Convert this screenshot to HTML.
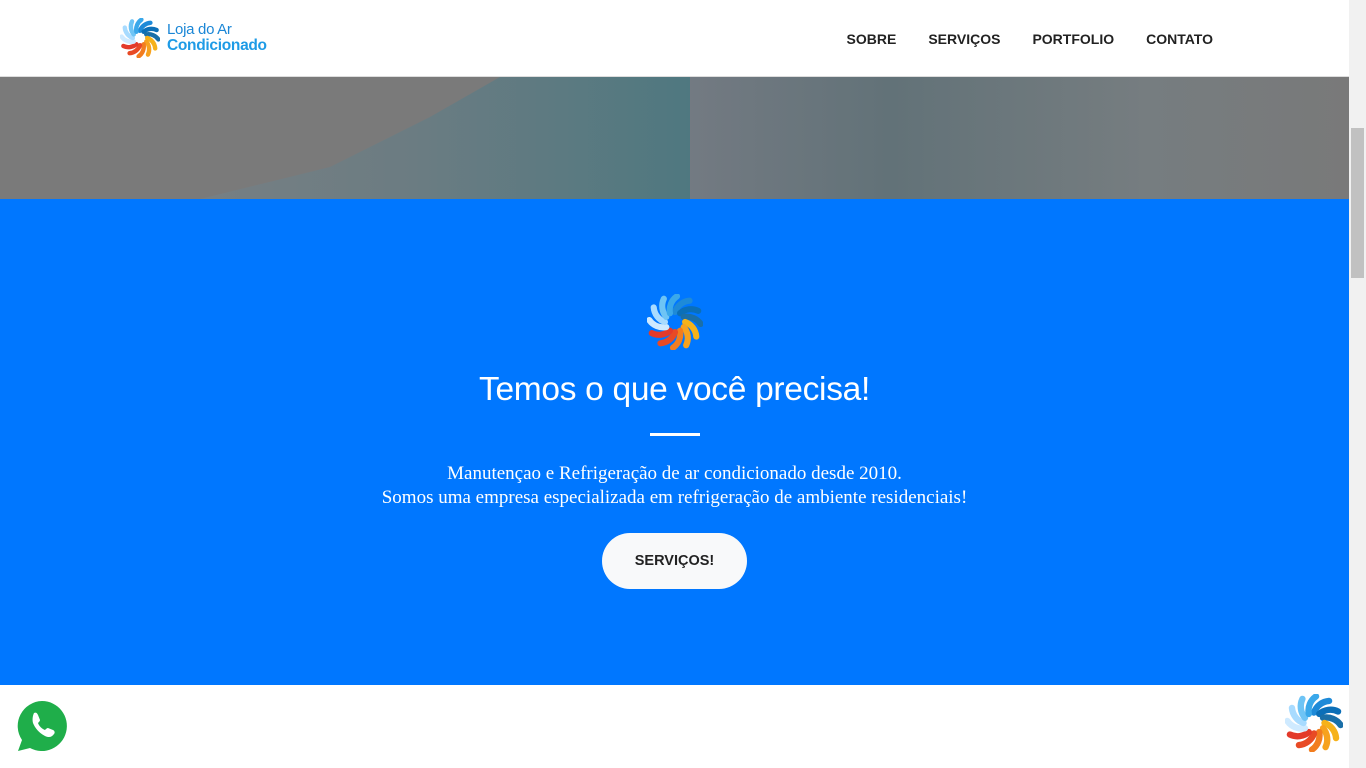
<!DOCTYPE html>
<html><head><meta charset="utf-8"><style>
*{margin:0;padding:0;box-sizing:border-box}
body{width:1366px;height:768px;overflow:hidden;font-family:"Liberation Sans",sans-serif;background:#fff;position:relative}
.page{position:absolute;left:0;top:0;width:1349px;height:768px}
header{position:absolute;top:0;left:0;width:1349px;height:77px;background:#fff;border-bottom:1px solid #ddd;z-index:2}
.logo{position:absolute;left:120px;top:18px;display:flex;align-items:center}
.lt{margin-left:7px;line-height:16px;color:#1a86d6}
.lt .a{font-size:15px;letter-spacing:-.3px}
.lt .b{font-size:15.5px;font-weight:bold;color:#1e9be6;letter-spacing:-.3px}
nav{position:absolute;right:136px;top:31px;display:flex;gap:32px}
nav a{font-size:14px;font-weight:bold;color:#222;letter-spacing:0;text-decoration:none}
.hero{position:absolute;top:77px;left:0;width:1349px;height:122px;overflow:hidden;background:linear-gradient(90deg,#7a7a7a 0%,#7a7a7a 50%,#737a82 51%,#627278 66%,#767d80 85%,#797979 100%)}
.shape{position:absolute;left:0;top:0;width:690px;height:122px;clip-path:polygon(500px 0,690px 0,690px 122px,200px 122px,330px 90px,430px 40px);background:linear-gradient(90deg,#7a8084 20%,#6b7c82 60%,#4f7880 100%)}
.blue{position:absolute;top:199px;left:0;width:1349px;height:486px;background:#0077ff;text-align:center;color:#fff}
h1{font-weight:normal;font-size:33.5px;position:absolute;top:172px;width:100%;letter-spacing:-.3px}
.line{position:absolute;left:650px;top:234px;width:50px;height:3px;background:#fff}
.p{position:absolute;top:263px;width:100%;font-family:"Liberation Serif",serif;font-size:19px;line-height:24px}
.btn{position:absolute;left:602px;top:334px;width:145px;height:56px;border-radius:28px;background:#f8f9fa;color:#222;font-weight:bold;font-size:14.5px;line-height:56px}
.sb{position:absolute;right:0;top:0;width:17px;height:768px;background:#f1f1f1}
.sb div{position:absolute;left:2px;top:128px;width:13px;height:150px;background:#c1c1c1}
</style></head><body>
<svg width="0" height="0" style="position:absolute"><defs>
<g id="sw">
<g fill="none" stroke-width="5.5" stroke-linecap="round">
<path d="M0-9 A15 15 0 0 1 13-19" stroke="#1e8ad8" transform="rotate(0)"/>
<path d="M0-9 A15 15 0 0 1 13-19" stroke="#0b6fb8" transform="rotate(30)"/>
<path d="M0-9 A15 15 0 0 1 13-19" stroke="#1a6fa8" transform="rotate(60)"/>
<path d="M0-9 A15 15 0 0 1 13-19" stroke="#f6b21a" transform="rotate(90)"/>
<path d="M0-9 A15 15 0 0 1 13-19" stroke="#f7a21e" transform="rotate(120)"/>
<path d="M0-9 A15 15 0 0 1 13-19" stroke="#f27d1f" transform="rotate(150)"/>
<path d="M0-9 A15 15 0 0 1 13-19" stroke="#e84a25" transform="rotate(180)"/>
<path d="M0-9 A15 15 0 0 1 13-19" stroke="#e33a2a" transform="rotate(210)"/>
<path d="M0-9 A15 15 0 0 1 13-19" stroke="#cfeaff" transform="rotate(240)"/>
<path d="M0-9 A15 15 0 0 1 13-19" stroke="#a8dbff" transform="rotate(270)"/>
<path d="M0-9 A15 15 0 0 1 13-19" stroke="#6ec4f5" transform="rotate(300)"/>
<path d="M0-9 A15 15 0 0 1 13-19" stroke="#3aa8ea" transform="rotate(330)"/>
</g></g></defs></svg>
<div class="page">
<header>
<div class="logo"><svg width="40" height="40" viewBox="-25 -25 50 50"><use href="#sw"/></svg>
<div class="lt"><div class="a">Loja do Ar</div><div class="b">Condicionado</div></div></div>
<nav><a>SOBRE</a><a>SERVIÇOS</a><a>PORTFOLIO</a><a>CONTATO</a></nav>
</header>
<div class="hero"><div class="shape"></div></div>
<div class="blue">
<svg style="position:absolute;left:647px;top:95px" width="56" height="56" viewBox="-25 -25 50 50"><use href="#sw"/></svg>
<h1>Temos o que você precisa!</h1>
<div class="line"></div>
<div class="p">Manutençao e Refrigeração de ar condicionado desde 2010.<br>Somos uma empresa especializada em refrigeração de ambiente residenciais!</div>
<div class="btn">SERVIÇOS!</div>
</div>
<svg style="position:absolute;left:15px;top:699px" width="54" height="54" viewBox="0 0 54 54">
<path d="M27 2a25 25 0 1 1-12 47L3 52l4-11A25 25 0 0 1 27 2z" fill="#1fae4a"/>
<path d="M19 14c2-1 3 0 4 2l2 5c0 1-1 2-2 3 1 3 4 6 7 7 1-1 2-2 3-2l5 2c2 1 2 3 1 4-2 3-5 4-9 2-6-3-10-8-12-13-1-4 0-8 1-10z" fill="#fff"/>
</svg>
<svg style="position:absolute;left:1285px;top:694px" width="58" height="58" viewBox="-25 -25 50 50"><use href="#sw"/></svg>
</div>
<div class="sb"><div></div></div>
</body></html>
